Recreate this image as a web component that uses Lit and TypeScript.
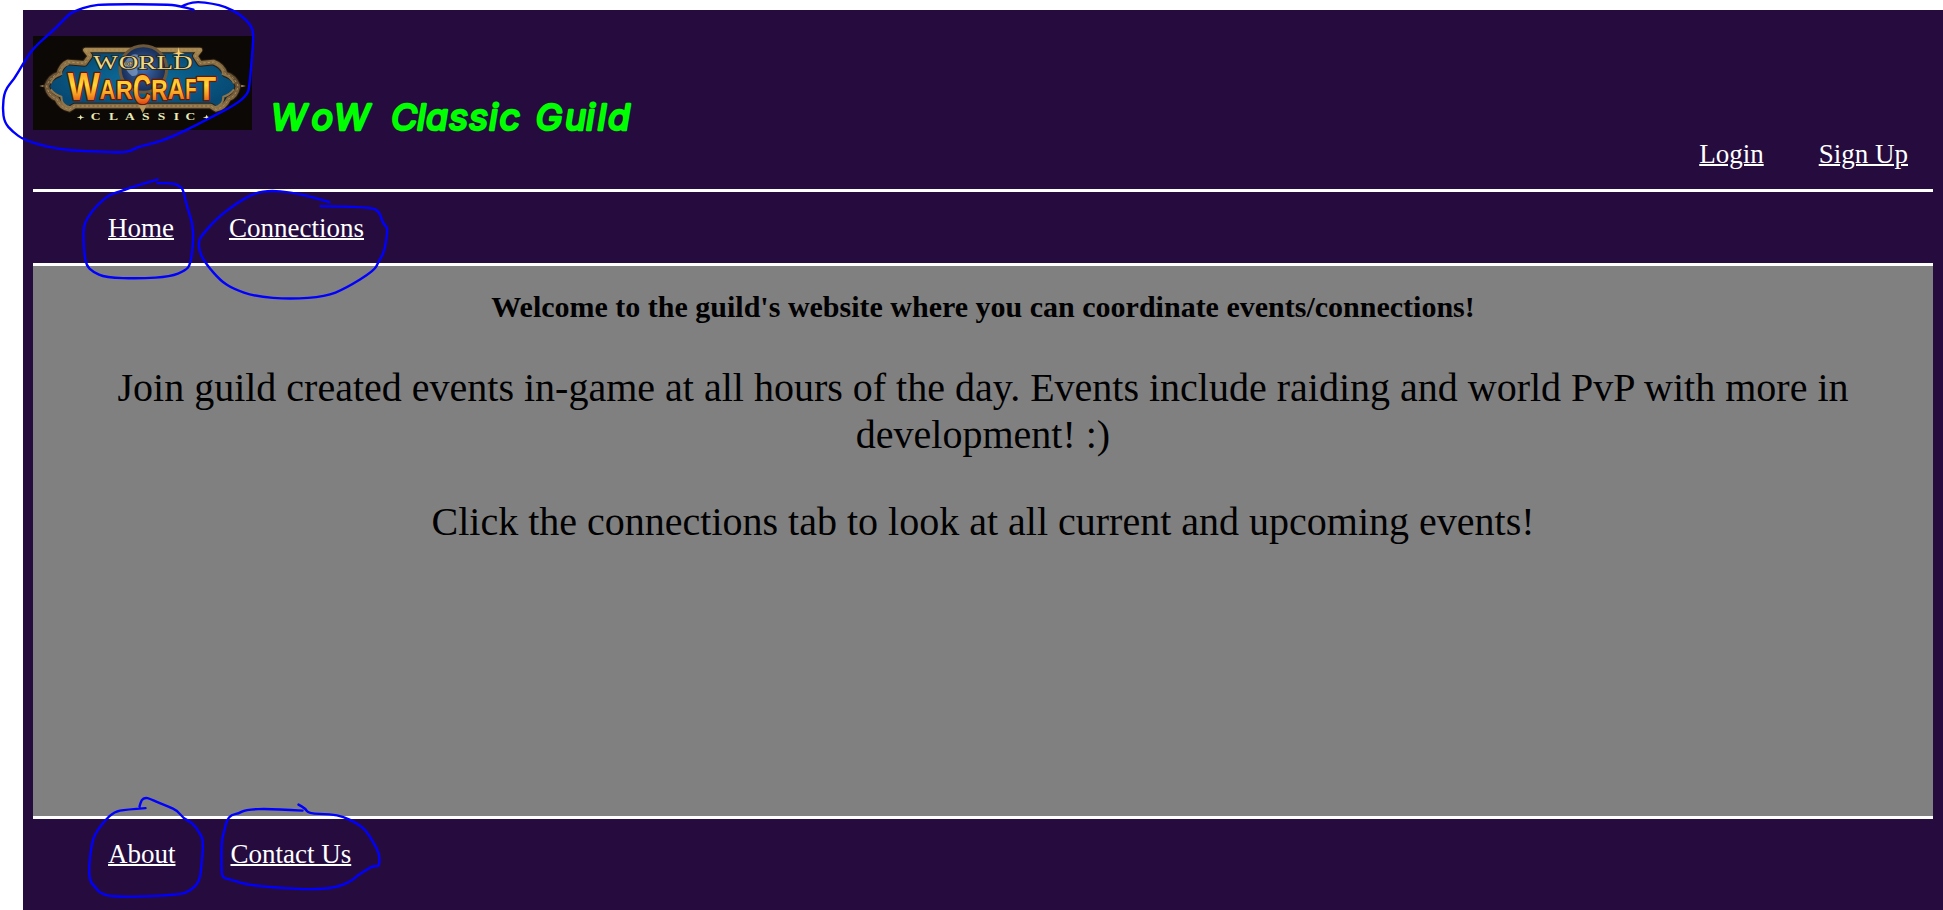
import { LitElement, html, css, svg } from "lit";
import { customElement } from "lit/decorators.js";

@customElement("guild-logo")
class GuildLogo extends LitElement {
  static styles = css`
    :host { display: block; width: 219px; height: 94px; }
    svg { display: block; width: 219px; height: 94px; }
    .serif { font-family: "Liberation Serif", serif; }
    .war { font-family: "Liberation Sans", sans-serif; font-weight: 700; }
  `;
  render() {
    const frame = "M256 150 L600 150 L586 168 L600 190 L640 186 Q668 196 676 222 Q704 230 714 258 Q708 290 686 296 Q674 322 648 328 L632 318 L224 318 L208 328 Q182 322 170 296 Q146 288 140 258 Q150 230 176 222 Q184 194 204 186 L254 190 L270 168 Z";
    // Each letter of the banner: glyph, left edge, baseline, width, size.
    const letters: [string, number, number, number, number][] = [
      ["W", 203, 300, 96, 118], ["A", 299, 297, 47, 82], ["R", 348, 297, 50, 80], ["C", 399, 312, 54, 126],
      ["R", 454, 299, 49, 90], ["A", 503, 297, 51, 88], ["F", 556, 297, 34, 88], ["T", 590, 299, 58, 100],
    ];
    return html`<svg viewBox="99 108 657 282">
      <defs>
        <linearGradient id="gold" x1="0" y1="0" x2="0" y2="1">
          <stop offset="0" stop-color="#a58650" /><stop offset=".5" stop-color="#604a32" /><stop offset="1" stop-color="#8d7148" />
        </linearGradient>
        <linearGradient id="fire" gradientUnits="userSpaceOnUse" x1="0" y1="218" x2="0" y2="312">
          <stop offset="0" stop-color="#ffa526" /><stop offset=".4" stop-color="#ffd936" /><stop offset=".7" stop-color="#f59a20" /><stop offset="1" stop-color="#dd4a18" />
        </linearGradient>
        <radialGradient id="field"><stop offset="0" stop-color="#0d6f9c" /><stop offset="1" stop-color="#064a74" /></radialGradient>
        <radialGradient id="globe"><stop offset="0" stop-color="#3f6db0" /><stop offset="1" stop-color="#152a52" /></radialGradient>
      </defs>
      <rect x="99" y="108" width="657" height="282" fill="#0b0806" />
      <path d="M118 258 L150 250 L150 266 Z M738 258 L704 250 L704 266 Z" fill="#a88b5c" />
      <path d=${frame} fill="url(#field)" stroke="#2a1d10" stroke-width="20" stroke-linejoin="round" />
      <path d=${frame} fill="none" stroke="url(#gold)" stroke-width="14" stroke-linejoin="round" />
      <path d=${frame} fill="none" stroke="#b09560" stroke-width="3" stroke-dasharray="7 6" />
      <g fill="none" stroke="#8f754a" stroke-width="6">
        <path d="M206 192 Q180 200 184 222 Q160 228 152 250 M152 268 Q164 284 184 290 Q184 318 212 322" />
        <path d="M646 192 Q672 200 668 222 Q692 228 702 250 M702 268 Q690 284 670 290 Q670 318 642 322" />
      </g>
      <circle cx="430" cy="207" r="70" fill="url(#globe)" stroke="#6d573a" stroke-width="9" />
      <path d="M372 190 Q396 150 420 168 Q440 190 410 204 Q420 230 396 228 Q376 214 372 190 Z" fill="#9cb8d8" opacity=".55" />
      <g class="serif" fill="#ead98b" stroke="#2e2413" stroke-width="5" paint-order="stroke">
        <text x="280" y="206" font-size="55" textLength="74" lengthAdjust="spacingAndGlyphs">W</text>
        <text x="356" y="206" font-size="55" textLength="222" lengthAdjust="spacingAndGlyphs">ORLD</text>
        <text x="372" y="197" font-size="19" stroke-width="2" textLength="26" lengthAdjust="spacingAndGlyphs">OF</text>
      </g>
      <path d="M536 142 L539 157 L554 160 L539 163 L536 178 L533 163 L518 160 L533 157 Z" fill="#ffd06a" />
      <g class="war" fill="url(#fire)" stroke="#6b1808" stroke-width="8" paint-order="stroke" stroke-linejoin="round">
        ${letters.map(([c, x, y, w, s]) => svg`<text x=${x} y=${y} font-size=${s} textLength=${w} lengthAdjust="spacingAndGlyphs">${c}</text>`)}
      </g>
      <path d="M416 316 L440 316 L428 340 Z" fill="#b5955a" />
      <g fill="#ecebb4">
        <text class="serif" transform="translate(272 361) scale(1.45 1)" font-size="28" font-weight="700" x="0 38 71 106 139 172 196">CLASSIC</text>
        <path d="M230 352 L239 350 L242 344 L245 350 L254 352 L245 354 L242 360 L239 354 Z M608 352 L617 350 L620 344 L623 350 L632 352 L623 354 L620 360 L617 354 Z" />
      </g>
    </svg>`;
  }
}

type Point = [number, number];

const strokes: Point[][] = [
  [[193,9],[178,5],[165,3.7],[105,3.5],[90,5],[75,10],[68,14],[55,28],[33,47],[22,64],[14,78],[4,90],[2,108],[4,122],[12,131],[23,139],[45,146],[70,150],[100,151],[122,152],[131,150],[138,146],[160,141],[185,130],[210,117],[235,104],[247,94],[249,85],[252,50],[253,32],[250,24],[240,14],[225,6],[212,3],[197,1],[187,3],[181,6]],
  [[157,179],[139,184],[119,191],[109,194],[96,205],[87,217],[83,226],[83,240],[84,255],[86,265],[92,271],[105,277],[140,278],[170,276],[185,270],[190,264],[193,240],[192,222],[186,205],[183,190],[180,186],[173,182.5],[157,182.5]],
  [[329,201.5],[310,196],[290,191.5],[270,190],[255,192],[235,203],[215,219],[202,234],[198,240],[199,252],[206,264],[220,280],[232,288],[255,296],[290,298.5],[325,296],[345,288],[374,270],[378,261],[384,251],[387,230],[386,226],[382,222],[379,211],[370,206.5],[320,205.5]],
  [[145,807.5],[125,809],[114,811],[104,820],[94,834],[91,845],[88.5,865],[89,880],[95,887],[100,893],[112,896],[140,896],[180,894],[190,890],[199,881],[201,865],[203,840],[199,832],[192,822],[183,818],[177,810],[168,806],[158,802],[149,798],[145,797],[141,799],[139,806]],
  [[302,810],[270,808],[245,809],[238,813],[231,814],[226,820],[224,830],[221,840],[221,870],[222,877],[230,879],[246,884],[275,887],[312,889],[335,887],[350,881],[357,875],[365,870],[373,865],[379,866],[379,853],[373,842],[365,829],[355,822],[343,816],[330,813.5],[308,813],[305,808],[298,804]],
];

// Pen line: quadratic segments through the midpoints of the sampled points.
function penLine(points: Point[]): string {
  let d = `M${points[0]}`;
  for (let i = 1; i < points.length - 1; i++) {
    const [x, y] = points[i];
    const [nx, ny] = points[i + 1];
    d += ` Q${x} ${y} ${(x + nx) / 2} ${(y + ny) / 2}`;
  }
  return `${d} L${points[points.length - 1]}`;
}

@customElement("app-root")
class AppRoot extends LitElement {
  static styles = css`
    :host { display: block; position: relative; width: 1943px; height: 910px; overflow: hidden; background: #fff; font-family: "Liberation Serif", serif; }
    .page { box-sizing: border-box; height: 900px; margin: 10px 0 0 23px; padding: 0 10px; background: #260c3e; }
    header { display: flex; height: 179px; border-bottom: 3px solid #fff; }
    guild-logo { margin-top: 26px; }
    h1 { margin: 80px 0 0 18px; font-size: 37px; line-height: 50px; }
    .title { display: block; width: 380px; height: 50px; font: italic 400 36px Inter, sans-serif; font-feature-settings: "cv11"; fill: #0f0; stroke: #0f0; stroke-width: 2.6; stroke-linejoin: round; }
    a { color: #fff; font-size: 27px; line-height: 31px; text-decoration: underline; text-decoration-thickness: 2px; }
    nav { display: flex; gap: 55px; }
    .account { margin: 129px 25px 0 auto; }
    .main { height: 71px; border-bottom: 3px solid #fff; padding-left: 75px; align-items: flex-start; }
    .main a { margin-top: 21px; }
    main { display: flow-root; height: 550px; background: #808080; border-bottom: 3px solid #fff; text-align: center; color: #000; }
    h2 { margin: 24px 0 0; font-size: 30px; line-height: 34px; }
    p { margin: 40px 80px 0; font-size: 40px; line-height: 47px; }
    .foot { padding: 20px 0 0 75px; }
    .marks { position: absolute; left: 0; top: 0; width: 1943px; height: 910px; pointer-events: none; fill: none; stroke: #00f; stroke-width: 2.4; stroke-linecap: round; }
  `;
  render() {
    return html`<div class="page">
        <header><guild-logo></guild-logo>
          <h1><svg class="title" viewBox="270 90 380 50"><text y="129.5" x="271 311.5 334 391 391 417.5 426 449 468.5 489 499.5 525 536 565 586 598 608"><tspan x="271 311.5 334">WoW</tspan> <tspan x="391 417 426 449 469 489 499.5">Classic</tspan> <tspan x="535.5 565 586 597.5 608">Guild</tspan></text></svg></h1>
          <nav class="account"><a>Login</a><a>Sign Up</a></nav></header>
        <nav class="main"><a>Home</a><a>Connections</a></nav>
        <main><h2>Welcome to the guild's website where you can coordinate events/connections!</h2>
          <p>Join guild created events in-game at all hours of the day. Events include raiding and world PvP with more in development! :)</p>
          <p>Click the connections tab to look at all current and upcoming events!</p></main>
        <nav class="foot"><a>About</a><a>Contact Us</a></nav>
      </div>
      <svg class="marks"><g transform="translate(0.5 0.6)">${strokes.map((s) => svg`<path d=${penLine(s)} />`)}</g></svg>`;
  }
}
